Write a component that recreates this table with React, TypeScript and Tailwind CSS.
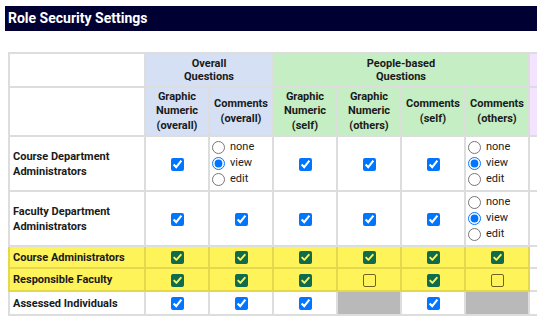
import React from 'react';

type Cell =
  | { kind: 'check'; on: boolean }
  | { kind: 'radio'; value: 'none' | 'view' | 'edit' }
  | { kind: 'na' };

interface Role {
  name: string[];
  highlight?: boolean;
  height: string;
  cells: Cell[];
}

const on: Cell = { kind: 'check', on: true };
const off: Cell = { kind: 'check', on: false };
const view: Cell = { kind: 'radio', value: 'view' };
const na: Cell = { kind: 'na' };

const roles: Role[] = [
  { name: ['Course Department', 'Administrators'], height: 'h-[55px]', cells: [on, view, on, on, on, view] },
  { name: ['Faculty Department', 'Administrators'], height: 'h-[55px]', cells: [on, on, on, on, on, view] },
  { name: ['Course Administrators'], highlight: true, height: 'h-[22px]', cells: [on, on, on, on, on, on] },
  { name: ['Responsible Faculty'], highlight: true, height: 'h-[23px]', cells: [on, on, on, off, on, off] },
  { name: ['Assessed Individuals'], height: 'h-[24px]', cells: [on, on, on, na, on, na] },
];

const subHeaders = [
  { lines: ['Graphic', 'Numeric', '(overall)'], bg: 'bg-[#d5e0f4]' },
  { lines: ['Comments', '(overall)'], bg: 'bg-[#d5e0f4]' },
  { lines: ['Graphic', 'Numeric', '(self)'], bg: 'bg-[#c5eec5]' },
  { lines: ['Graphic', 'Numeric', '(others)'], bg: 'bg-[#c5eec5]' },
  { lines: ['Comments', '(self)'], bg: 'bg-[#c5eec5]' },
  { lines: ['Comments', '(others)'], bg: 'bg-[#c5eec5]' },
];

function YellowCheck({ checked }: { checked: boolean }) {
  if (!checked) {
    return <span className="inline-block w-[13px] h-[13px] rounded-[2px] border border-[#6e6320] align-middle" />;
  }
  return (
    <span className="inline-flex items-center justify-center w-[13px] h-[13px] rounded-[2px] bg-[#0e6b4d] align-middle">
      <svg width="11" height="11" viewBox="0 0 11 11">
        <path d="M2.2 5.6 L4.4 7.9 L8.8 2.8" fill="none" stroke="#fff35a" strokeWidth="1.9" strokeLinecap="round" strokeLinejoin="round" />
      </svg>
    </span>
  );
}

function RadioGroup({ name, value }: { name: string; value: string }) {
  return (
    <div className="flex flex-col items-start pl-[2px]">
      {['none', 'view', 'edit'].map((opt) => (
        <label key={opt} className="flex items-center h-[16px] text-[11px] text-[#222]">
          <input
            type="radio"
            name={name}
            defaultChecked={opt === value}
            className="m-0 mr-[5px] w-[13px] h-[13px]"
          />
          {opt}
        </label>
      ))}
    </div>
  );
}

export default function App() {
  return (
    <div className="w-[537px] h-[327px] overflow-hidden bg-white pt-[6px] pl-[5px] font-['Roboto',sans-serif]">
      {/* Title bar */}
      <div className="h-[25px] w-[560px] bg-[#000033] text-white font-bold text-[14px] flex items-center pl-[3px]">
        Role Security Settings
      </div>

      <table className="mt-[21px] ml-[3px] border-collapse table-fixed w-[597px] text-[#1a1a1a]">
        <colgroup>
          <col className="w-[136px]" />
          <col className="w-[64px]" />
          <col className="w-[64px]" />
          <col className="w-[64px]" />
          <col className="w-[64px]" />
          <col className="w-[64px]" />
          <col className="w-[64px]" />
          <col className="w-[77px]" />
        </colgroup>
        <thead>
          <tr className="h-[34px]">
            <th className="border-2 border-[#dddddd] bg-white" />
            <th colSpan={2} className="border-2 border-[#dddddd] bg-[#d5e0f4] text-[11px] font-bold leading-[13px] text-center">
              Overall
              <br />
              Questions
            </th>
            <th colSpan={4} className="border-2 border-[#dddddd] bg-[#c5eec5] text-[11px] font-bold leading-[13px] text-center">
              People-based
              <br />
              Questions
            </th>
            <th className="border-2 border-[#dddddd] bg-[#f3e3fe]" />
          </tr>
          <tr className="h-[49px]">
            <th className="border-2 border-[#dddddd] bg-white" />
            {subHeaders.map((h, i) => (
              <th key={i} className={`border-2 border-[#dddddd] ${h.bg} text-[11px] font-bold leading-[14.5px] text-center px-0`}>
                {h.lines.map((l, j) => (
                  <React.Fragment key={j}>
                    {j > 0 && <br />}
                    {l}
                  </React.Fragment>
                ))}
              </th>
            ))}
            <th className="border-2 border-[#dddddd] bg-[#f3e3fe]" />
          </tr>
        </thead>
        <tbody>
          {roles.map((role, r) => {
            const bc = role.highlight ? 'border-[#e6d84c]' : 'border-[#dddddd]';
            const bg = role.highlight ? 'bg-[#fff35a]' : 'bg-white';
            return (
              <tr key={r} className={role.height}>
                <td className={`border-2 ${bc} ${bg} py-0 pl-[3px] text-[11px] font-bold leading-[15px] align-middle`}>
                  {role.name.map((l, j) => (
                    <div key={j}>{l}</div>
                  ))}
                </td>
                {role.cells.map((c, i) => {
                  if (c.kind === 'na') {
                    return <td key={i} className="border-2 border-[#dddddd] bg-[#b9b9b9] p-0" />;
                  }
                  if (c.kind === 'radio') {
                    return (
                      <td key={i} className={`border-2 ${bc} ${bg} align-middle p-0`}>
                        <RadioGroup name={`r${r}c${i}`} value={c.value} />
                      </td>
                    );
                  }
                  return (
                    <td key={i} className={`border-2 ${bc} ${bg} text-center align-middle p-0 leading-[13px]`}>
                      {role.highlight ? (
                        <YellowCheck checked={c.on} />
                      ) : (
                        <input type="checkbox" defaultChecked={c.on} className="m-0 w-[13px] h-[13px] align-middle" />
                      )}
                    </td>
                  );
                })}
                <td className="border-2 border-[#dddddd] bg-white p-0" />
              </tr>
            );
          })}
        </tbody>
      </table>
    </div>
  );
}
